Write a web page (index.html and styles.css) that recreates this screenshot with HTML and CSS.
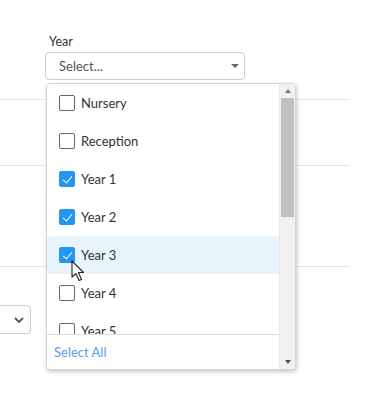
FILE: index.html
```html
<!DOCTYPE html>
<html lang="en">
<head>
<meta charset="UTF-8">
<meta name="viewport" content="width=device-width, initial-scale=1.0">
<title>Year filter</title>
<link rel="stylesheet" href="styles.css">
</head>
<body>

<div class="page">
  <div class="field">
    <label class="field-label">Year</label>
    <div class="select">
      <span class="select-text">Select...</span>
      <span class="caret"></span>
    </div>
  </div>

  <div class="rows">
    <div class="row row-a"></div>
    <div class="row row-b"></div>
    <div class="row row-c"></div>
    <div class="row row-d">
      <div class="mini-select">
        <svg width="10" height="6" viewBox="0 0 10 6"><path d="M1 1 L5 5 L9 1" fill="none" stroke="#555" stroke-width="1.8"/></svg>
      </div>
    </div>
  </div>

  <!-- open dropdown of the Year select -->
  <div class="dropdown">
    <div class="dropdown-main">
      <ul class="options">
        <li class="option"><span class="box"></span>Nursery</li>
        <li class="option"><span class="box"></span>Reception</li>
        <li class="option"><span class="box checked"></span>Year 1</li>
        <li class="option"><span class="box checked"></span>Year 2</li>
        <li class="option hover"><span class="box checked"></span>Year 3</li>
        <li class="option"><span class="box"></span>Year 4</li>
        <li class="option"><span class="box"></span>Year 5</li>
      </ul>
      <div class="dropdown-footer">
        <a class="select-all">Select All</a>
      </div>
    </div>
    <div class="scrollbar">
      <span class="arrow up"></span>
      <div class="track"><div class="thumb"></div></div>
      <span class="arrow down"></span>
    </div>
  </div>

  <svg class="cursor" width="14" height="22" viewBox="0 0 14 22">
    <path d="M1 1 L1 17 L5 13.5 L8 20.5 L10.5 19.5 L7.5 12.5 L12.5 12.5 Z" fill="#fff" stroke="#222" stroke-width="1.1" stroke-linejoin="round"/>
  </svg>
</div>

</body>
</html>
```

FILE: styles.css
```css
* {
  box-sizing: border-box;
}
body {
  margin: 0;
  background: #fff;
  font-family: "Source Sans Pro", Lato, "Noto Sans", sans-serif;
  color: #333;
}
.page {
  position: relative;
  width: 367px;
  height: 403px;
  overflow: hidden;
}
.field {
  padding: 34px 0 0 45px;
}
.field-label {
  display: block;
  font-size: 12.5px;
  line-height: 16px;
  padding-left: 4px;
  margin-bottom: 2px;
}
.select {
  width: 200px;
  height: 28px;
  border: 1px solid #ccc;
  border-radius: 4px;
  display: flex;
  align-items: center;
  justify-content: space-between;
  padding: 0 5px 0 13px;
}
.select-text {
  font-size: 13px;
  color: #555;
}
.caret {
  width: 0;
  height: 0;
  border-left: 4px solid transparent;
  border-right: 4px solid transparent;
  border-top: 4px solid #666;
}
.rows {
  width: 350px;
}
.row {
  border-bottom: 1px solid #e6e6e6;
}
.row-a { height: 20px; }
.row-b { height: 66px; }
.row-c { height: 101px; }
.row-d {
  border-bottom: none;
  padding-top: 38px;
}
.mini-select {
  width: 71px;
  height: 29px;
  margin-left: -40px;
  border: 1px solid #ccc;
  border-radius: 4px;
  display: flex;
  align-items: center;
  justify-content: flex-end;
  padding-right: 6px;
}
.dropdown {
  position: absolute;
  top: 83px;
  left: 46px;
  width: 250px;
  height: 287px;
  border: 1px solid #d6d6d6;
  border-radius: 4px;
  background: #fff;
  box-shadow: 1px 2px 4px rgba(0, 0, 0, 0.22);
  display: flex;
  overflow: hidden;
}
.dropdown-main {
  flex: 1;
  display: flex;
  flex-direction: column;
}
.options {
  list-style: none;
  margin: 0;
  padding: 0;
  height: 250px;
  flex: none;
  overflow: hidden;
}
.option {
  height: 38px;
  display: flex;
  align-items: center;
  padding-left: 12px;
  font-size: 13px;
  color: #333;
}
.option.hover {
  background: #e8f4fc;
}
.box {
  width: 16px;
  height: 16px;
  border: 1.5px solid #666;
  border-radius: 2px;
  margin-right: 6px;
  position: relative;
  flex: none;
}
.box.checked {
  background: #2196f3;
  border-color: #2196f3;
}
.box.checked::after {
  content: "";
  position: absolute;
  left: 4.5px;
  top: 1.5px;
  width: 4px;
  height: 8px;
  border: solid #fff;
  border-width: 0 1.5px 1.5px 0;
  transform: rotate(40deg);
}
.dropdown-footer {
  border-top: 1px solid #ddd;
  flex: 1;
  display: flex;
  align-items: center;
  padding-left: 7px;
}
.select-all {
  font-size: 13px;
  color: #5a9ee6;
}
.scrollbar {
  width: 16px;
  flex: none;
  background: #f1f1f1;
  border-left: 1px solid #e8e8e8;
  display: flex;
  flex-direction: column;
  align-items: center;
}
.track {
  flex: 1;
  width: 100%;
  padding: 0 1px;
}
.thumb {
  height: 119px;
  background: #c1c1c1;
}
.arrow {
  width: 0;
  height: 0;
  border-left: 3.5px solid transparent;
  border-right: 3.5px solid transparent;
  margin: 5px 0;
}
.arrow.up {
  border-bottom: 4px solid #777;
}
.arrow.down {
  border-top: 4px solid #505050;
}
.cursor {
  position: absolute;
  left: 71px;
  top: 260px;
}
```
